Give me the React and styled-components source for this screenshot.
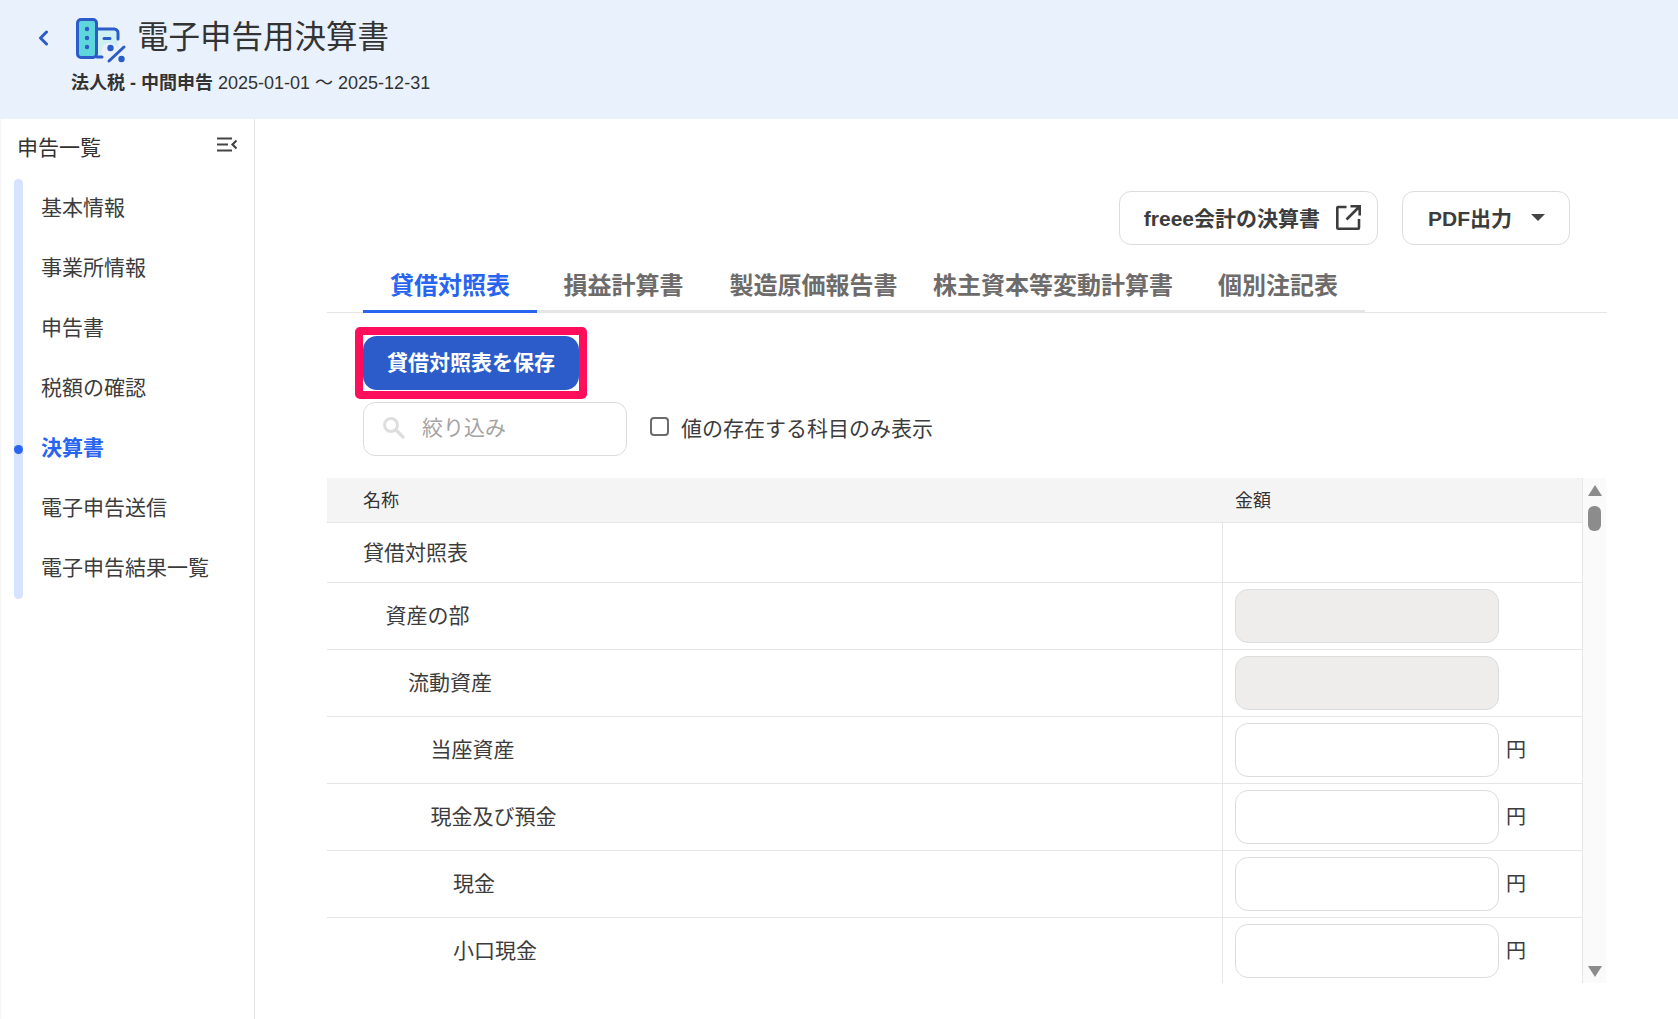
import React from 'react';
import styled, { createGlobalStyle } from 'styled-components';

const GlobalStyle = createGlobalStyle`
    html, body {
        margin: 0;
        padding: 0;
        height: 100%;
        overflow: hidden;
        background: #fff;
    }
    body {
        font-family: "Liberation Sans", "Noto Sans CJK JP", sans-serif;
        color: #323232;
    }
    * {
        box-sizing: border-box;
    }
`;

const steps = ['基本情報', '事業所情報', '申告書', '税額の確認', '決算書', '電子申告送信', '電子申告結果一覧'];
const tabs = ['貸借対照表', '損益計算書', '製造原価報告書', '株主資本等変動計算書', '個別注記表'];
const rows = [
    { name: '貸借対照表', level: 0, kind: 'none' },
    { name: '資産の部', level: 1, kind: 'disabled' },
    { name: '流動資産', level: 2, kind: 'disabled' },
    { name: '当座資産', level: 3, kind: 'input' },
    { name: '現金及び預金', level: 3, kind: 'input' },
    { name: '現金', level: 4, kind: 'input' },
    { name: '小口現金', level: 4, kind: 'input' },
];

function DocIcon() {
    return (
        <svg width="52" height="46" viewBox="0 0 52 46">
            <path d="M22 11h16a4 4 0 0 1 4 4v24H22z" fill="#cff0f3" />
            <path d="M44 38a11 11 0 0 0-15-12 12 12 0 0 0-2 14h17z" fill="#e9f1fd" />
            <path d="M21 11h17a4 4 0 0 1 4 4v6M21 39h5" fill="none" stroke="#2b5cc9" strokeWidth="3" strokeLinecap="round" />
            <rect x="1.5" y="1.5" width="19" height="38" rx="3.5" fill="#5fd5dc" stroke="#2b5cc9" strokeWidth="3" />
            <circle cx="11" cy="11" r="2.2" fill="#2b5cc9" />
            <circle cx="11" cy="20" r="2.2" fill="#2b5cc9" />
            <circle cx="11" cy="29" r="2.2" fill="#2b5cc9" />
            <path d="M28 20.5h6M33 43l15-14" stroke="#2b5cc9" strokeWidth="3" strokeLinecap="round" />
            <circle cx="34.5" cy="30" r="3.2" fill="#2b5cc9" />
            <circle cx="45.5" cy="41" r="3.2" fill="#2b5cc9" />
        </svg>
    );
}

function App() {
    return (
        <Page>
            <GlobalStyle />
            <Header>
                <TitleRow>
                    <BackLink aria-label="戻る">
                        <svg width="11" height="16" viewBox="0 0 11 16">
                            <path d="M8.5 2L2.5 8l6 6" fill="none" stroke="#2b5cc9" strokeWidth="3" strokeLinecap="round" strokeLinejoin="round" />
                        </svg>
                    </BackLink>
                    <DocIcon />
                    <Title>電子申告用決算書</Title>
                </TitleRow>
                <SubTitle>
                    <strong>法人税 - 中間申告</strong> 2025-01-01 ～ 2025-12-31
                </SubTitle>
            </Header>
            <Body>
                <Sidebar>
                    <SideHead>
                        <span>申告一覧</span>
                        <svg width="20" height="15" viewBox="0 0 20 15">
                            <path d="M0 1.5h15M0 7.5h11M0 13.5h15M19.5 3.5l-4 4 4 4" fill="none" stroke="#444" strokeWidth="2.2" />
                        </svg>
                    </SideHead>
                    <Steps>
                        {steps.map((step) => (
                            <Step key={step} $active={step === '決算書'}>{step}</Step>
                        ))}
                    </Steps>
                </Sidebar>
                <Main>
                    <Actions>
                        <OutlineButton>
                            freee会計の決算書
                            <svg width="25" height="25" viewBox="0 0 25 25">
                                <path d="M10.5 2H2.3a1 1 0 0 0-1 1v19.7a1 1 0 0 0 1 1H22a1 1 0 0 0 1-1V14" fill="none" stroke="#3c3c3c" strokeWidth="2.6" />
                                <path d="M14.5 1.3h9.2v9.2M23.5 1.5L10.5 14.5" fill="none" stroke="#3c3c3c" strokeWidth="2.6" />
                            </svg>
                        </OutlineButton>
                        <OutlineButton $wide>
                            PDF出力
                            <Caret />
                        </OutlineButton>
                    </Actions>
                    <TabBar>
                        {tabs.map((tab, i) => (
                            <Tab key={tab} $active={i === 0}>{tab}</Tab>
                        ))}
                    </TabBar>
                    <Tools>
                        <SaveButton>貸借対照表を保存</SaveButton>
                        <FilterRow>
                            <SearchBox>
                                <svg width="23" height="23" viewBox="0 0 23 23">
                                    <circle cx="9" cy="9" r="6.5" fill="none" stroke="#dedede" strokeWidth="3" />
                                    <path d="M14 14l7 7" stroke="#dedede" strokeWidth="3.4" strokeLinecap="round" />
                                </svg>
                                <SearchInput placeholder="絞り込み" />
                            </SearchBox>
                            <CheckLabel>
                                <CheckBox />
                                値の存在する科目のみ表示
                            </CheckLabel>
                        </FilterRow>
                    </Tools>
                    <TableWrap>
                        <Table>
                            <HeadRow>
                                <HeadCell>名称</HeadCell>
                                <HeadCell $amount>金額</HeadCell>
                            </HeadRow>
                            {rows.map((row) => (
                                <Row key={row.name} $short={row.kind === 'none'}>
                                    <NameCell $level={row.level}>{row.name}</NameCell>
                                    <AmountCell>
                                        {row.kind !== 'none' && <AmountBox disabled={row.kind === 'disabled'} />}
                                        {row.kind === 'input' && <Unit>円</Unit>}
                                    </AmountCell>
                                </Row>
                            ))}
                        </Table>
                        <ScrollBar>
                            <ScrollArrow />
                            <ScrollThumb />
                            <ScrollArrow $down />
                        </ScrollBar>
                    </TableWrap>
                </Main>
            </Body>
        </Page>
    );
}

const Page = styled.div`
    display: flex;
    flex-direction: column;
    height: 1019px;
`;

const Header = styled.header`
    height: 119px;
    background: #e9f1fd;
    padding: 18px 0 0 38px;
    flex-shrink: 0;
`;

const TitleRow = styled.div`
    display: flex;
    align-items: flex-start;
`;

const BackLink = styled.a`
    display: flex;
    width: 38px;
    padding-top: 12px;
`;

const Title = styled.h1`
    margin: 0 0 0 9px;
    font-size: 31.5px;
    font-weight: 400;
    line-height: 38px;
    color: #333;
`;

const SubTitle = styled.div`
    margin: 7px 0 0 33px;
    font-size: 18px;
    line-height: 24px;
    color: #333;
    strong {
        font-weight: 700;
    }
`;

const Body = styled.div`
    flex: 1;
    display: flex;
    min-height: 0;
`;

const Sidebar = styled.aside`
    width: 255px;
    flex-shrink: 0;
    border-right: 1px solid #e5e5e5;
    box-shadow: inset 2px 0 2px -1px rgba(0, 0, 0, 0.05);
`;

const SideHead = styled.div`
    height: 60px;
    padding: 0 18px 6px 17px;
    display: flex;
    align-items: center;
    justify-content: space-between;
    font-size: 21px;
    svg {
        margin: 0 -1px 4px 0;
    }
`;

const Steps = styled.ul`
    position: relative;
    list-style: none;
    margin: 0 0 0 14px;
    padding: 0 0 0 27px;
    &::before {
        content: "";
        position: absolute;
        left: 0;
        top: 0;
        bottom: 0;
        width: 9px;
        border-radius: 5px;
        background: #d5e3ff;
    }
`;

const Step = styled.li`
    position: relative;
    height: 60px;
    line-height: 58px;
    font-size: 21px;
    font-weight: ${(p) => (p.$active ? 700 : 400)};
    color: ${(p) => (p.$active ? '#2864f0' : '#3c3c3c')};
    &::before {
        content: "";
        display: ${(p) => (p.$active ? 'block' : 'none')};
        position: absolute;
        left: -27px;
        top: 26px;
        width: 9px;
        height: 9px;
        border-radius: 50%;
        background: #2864f0;
    }
`;

const Main = styled.main`
    flex: 1;
    min-width: 0;
    padding: 72px 71px 0 72px;
`;

const Actions = styled.div`
    display: flex;
    justify-content: flex-end;
    gap: 24px;
    padding-right: 37px;
`;

const OutlineButton = styled.button`
    display: flex;
    align-items: center;
    gap: ${(p) => (p.$wide ? '19px' : '16px')};
    height: 54px;
    padding: 0 ${(p) => (p.$wide ? '24px' : '16px')} 2px ${(p) => (p.$wide ? '25px' : '24px')};
    background: #fff;
    border: 1px solid #dcdcdc;
    border-radius: 12px;
    font-family: inherit;
    font-size: 21px;
    font-weight: 700;
    color: #3c3c3c;
`;

const Caret = styled.span`
    width: 0;
    height: 0;
    border-left: 7px solid transparent;
    border-right: 7px solid transparent;
    border-top: 7px solid #444;
`;

const TabBar = styled.div`
    display: grid;
    grid-template-columns: 174px 173px 207px 272px 176px;
    margin-top: 13px;
    padding-left: 36px;
    border-bottom: 1px solid #e6e6e6;
`;

const Tab = styled.div`
    height: 55px;
    line-height: 56px;
    text-align: center;
    font-size: 24px;
    font-weight: 700;
    margin-bottom: -1px;
    color: ${(p) => (p.$active ? '#2864f0' : '#6e6b6b')};
    border-bottom: 3px solid ${(p) => (p.$active ? '#2864f0' : '#e6e6e6')};
    &:last-child {
        padding-left: 2px;
    }
`;

const Tools = styled.div`
    padding: 23px 0 0 36px;
`;

const SaveButton = styled.button`
    position: relative;
    display: block;
    width: 216px;
    height: 54px;
    padding: 0 0 4px;
    border: 0;
    border-radius: 14px;
    background: #2b5cc9;
    color: #fff;
    font-family: inherit;
    font-size: 21px;
    font-weight: 700;
    /* 注釈の赤枠 */
    &::after {
        content: "";
        position: absolute;
        inset: -9px -8px;
        border: 8px solid #ff0f5b;
        border-radius: 5px;
    }
`;

const FilterRow = styled.div`
    display: flex;
    align-items: center;
    margin-top: 12px;
    gap: 23px;
`;

const SearchBox = styled.div`
    display: flex;
    align-items: center;
    gap: 17px;
    width: 264px;
    height: 54px;
    padding: 0 0 3px 18px;
    border: 1px solid #dcdcdc;
    border-radius: 12px;
`;

const SearchInput = styled.input`
    width: 120px;
    border: 0;
    outline: 0;
    padding: 0;
    font-family: inherit;
    font-size: 21px;
    &::placeholder {
        color: #a5a3a3;
    }
`;

const CheckLabel = styled.label`
    display: flex;
    align-items: center;
    gap: 12px;
    padding-bottom: 5px;
    font-size: 21px;
    color: #3c3c3c;
`;

const CheckBox = styled.span`
    width: 19px;
    height: 19px;
    border: 2px solid #6e6b6b;
    border-radius: 4px;
`;

const TableWrap = styled.div`
    display: flex;
    height: 505px;
    margin-top: 22px;
    overflow: hidden;
`;

const Table = styled.div`
    flex: 1;
    min-width: 0;
    border-right: 1px solid #e8e8e8;
`;

const HeadRow = styled.div`
    display: grid;
    grid-template-columns: 895px 1fr;
    height: 45px;
    background: #f5f4f5;
    border-bottom: 1px solid #e6e6e6;
`;

const HeadCell = styled.div`
    padding-left: ${(p) => (p.$amount ? '13px' : '36px')};
    font-size: 18px;
    line-height: 46px;
    color: #333;
`;

const Row = styled.div`
    display: grid;
    grid-template-columns: 895px 1fr;
    height: ${(p) => (p.$short ? '60px' : '67px')};
    border-bottom: 1px solid #e6e6e6;
`;

const NameCell = styled.div`
    display: flex;
    align-items: center;
    padding: 0 0 4px ${(p) => 36 + p.$level * 22.5}px;
    font-size: 21px;
    color: #3c3c3c;
`;

const AmountCell = styled.div`
    display: flex;
    align-items: center;
    gap: 7px;
    padding-left: 12px;
    border-left: 1px solid #e6e6e6;
`;

const AmountBox = styled.input`
    width: 264px;
    height: 54px;
    border: 1px solid #dcdcdc;
    border-radius: 13px;
    background: ${(p) => (p.disabled ? '#eeedec' : '#fff')};
    outline: 0;
`;

const Unit = styled.span`
    padding-bottom: 4px;
    font-size: 20px;
    color: #3c3c3c;
`;

const ScrollBar = styled.div`
    width: 23px;
    margin-right: 1px;
    flex-shrink: 0;
    display: flex;
    flex-direction: column;
    align-items: center;
    padding: 7px 0 6px;
    background: #fafafa;
`;

const ScrollArrow = styled.span`
    width: 0;
    height: 0;
    border-left: 7.5px solid transparent;
    border-right: 7.5px solid transparent;
    ${(p) => (p.$down
        ? 'border-top: 11px solid #8c8c8c; margin-top: auto;'
        : 'border-bottom: 11px solid #8c8c8c;')}
`;

const ScrollThumb = styled.span`
    width: 13px;
    height: 25px;
    margin-top: 10px;
    border-radius: 6px;
    background: #8c8c8c;
`;

export default App;
